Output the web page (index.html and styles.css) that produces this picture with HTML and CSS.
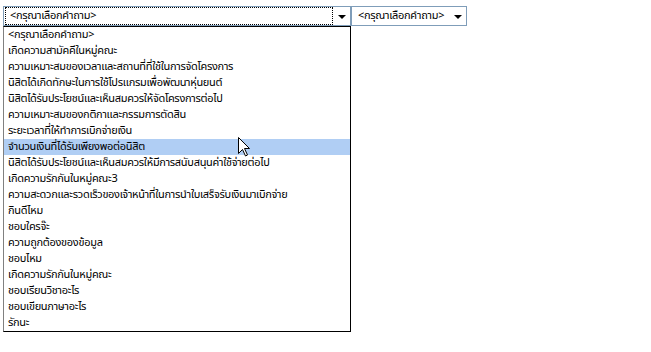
FILE: index.html
```html
<!DOCTYPE html>
<html lang="th">
<head>
    <meta charset="UTF-8">
    <title>แบบประเมิน</title>
    <link rel="stylesheet" href="styles.css">
</head>
<body>

    <div class="row">
        <div class="select-wrap">
            <div class="select wide">
                <span class="value focused">&lt;กรุณาเลือกคำถาม&gt;</span>
                <span class="arrow"></span>
            </div>
            <ul class="options">
                <li>&lt;กรุณาเลือกคำถาม&gt;</li>
                <li>เกิดความสามัคคีในหมู่คณะ</li>
                <li>ความเหมาะสมของเวลาและสถานที่ที่ใช้ในการจัดโครงการ</li>
                <li>นิสิตได้เกิดทักษะในการใช้โปรแกรมเพื่อพัฒนาหุ่นยนต์</li>
                <li>นิสิตได้รับประโยชน์และเห็นสมควรให้จัดโครงการต่อไป</li>
                <li>ความเหมาะสมของกติกาและกรรมการตัดสิน</li>
                <li>ระยะเวลาที่ให้ทำการเบิกจ่ายเงิน</li>
                <li class="hover">จำนวนเงินที่ได้รับเพียงพอต่อนิสิต</li>
                <li>นิสิตได้รับประโยชน์และเห็นสมควรให้มีการสนับสนุนค่าใช้จ่ายต่อไป</li>
                <li>เกิดความรักกันในหมู่คณะ3</li>
                <li>ความสะดวกและรวดเร็วของเจ้าหน้าที่ในการนำใบเสร็จรับเงินมาเบิกจ่าย</li>
                <li>กินดีไหม</li>
                <li>ชอบใครจ๊ะ</li>
                <li>ความถูกต้องของข้อมูล</li>
                <li>ชอบไหม</li>
                <li>เกิดความรักกันในหมู่คณะ</li>
                <li>ชอบเรียนวิชาอะไร</li>
                <li>ชอบเขียนภาษาอะไร</li>
                <li>รักนะ</li>
            </ul>
            <svg class="cursor" width="13" height="20" viewBox="0 0 13 20">
                <path d="M0.5 0.5 L0.5 16.5 L4.5 12.5 L7.5 19 L9.5 18 L6.5 11.5 L11.5 11.5 Z" fill="#fff" stroke="#000" stroke-width="1"/>
            </svg>
        </div>
        <div class="select narrow">
            <span class="value">&lt;กรุณาเลือกคำถาม&gt;</span>
            <span class="arrow"></span>
        </div>
    </div>

</body>
</html>
```

FILE: styles.css
```css
body {
    margin: 0;
    padding: 6px 0 0 3px;
    background: #fff;
    font-family: Tahoma, "Noto Sans Thai", "Loma", "Garuda", "Noto Sans", sans-serif;
    font-size: 11px;
    letter-spacing: -0.3px;
    color: #000;
}

.row {
    display: flex;
    align-items: flex-start;
}

.select-wrap {
    position: relative;
}

.select {
    display: flex;
    align-items: center;
    height: 20px;
    box-sizing: border-box;
    border: 1px solid #7f9db9;
    background: #fff;
}

.wide {
    width: 348px;
}

.narrow {
    width: 116px;
}

.value {
    flex: 1;
    height: 16px;
    line-height: 16px;
    padding-left: 4px;
    white-space: nowrap;
    overflow: hidden;
    border: 1px solid transparent;
    margin-left: 1px;
}

.focused {
    border: 1px dotted #000;
}

.arrow {
    width: 17px;
    height: 18px;
    display: flex;
    align-items: center;
    justify-content: center;
}

.arrow::before {
    content: "";
    border-left: 4px solid transparent;
    border-right: 4px solid transparent;
    border-top: 4px solid #000;
    margin-top: 2px;
}

.options {
    list-style: none;
    margin: 0;
    padding: 0;
    width: 348px;
    box-sizing: border-box;
    border: 1px solid #000;
    border-left-color: #808080;
    background: #fff;
}

.options li {
    height: 16px;
    line-height: 16px;
    padding-left: 4px;
    white-space: nowrap;
}

.options li.hover {
    background: #b0cef4;
}

.cursor {
    position: absolute;
    left: 235px;
    top: 131px;
}
```
